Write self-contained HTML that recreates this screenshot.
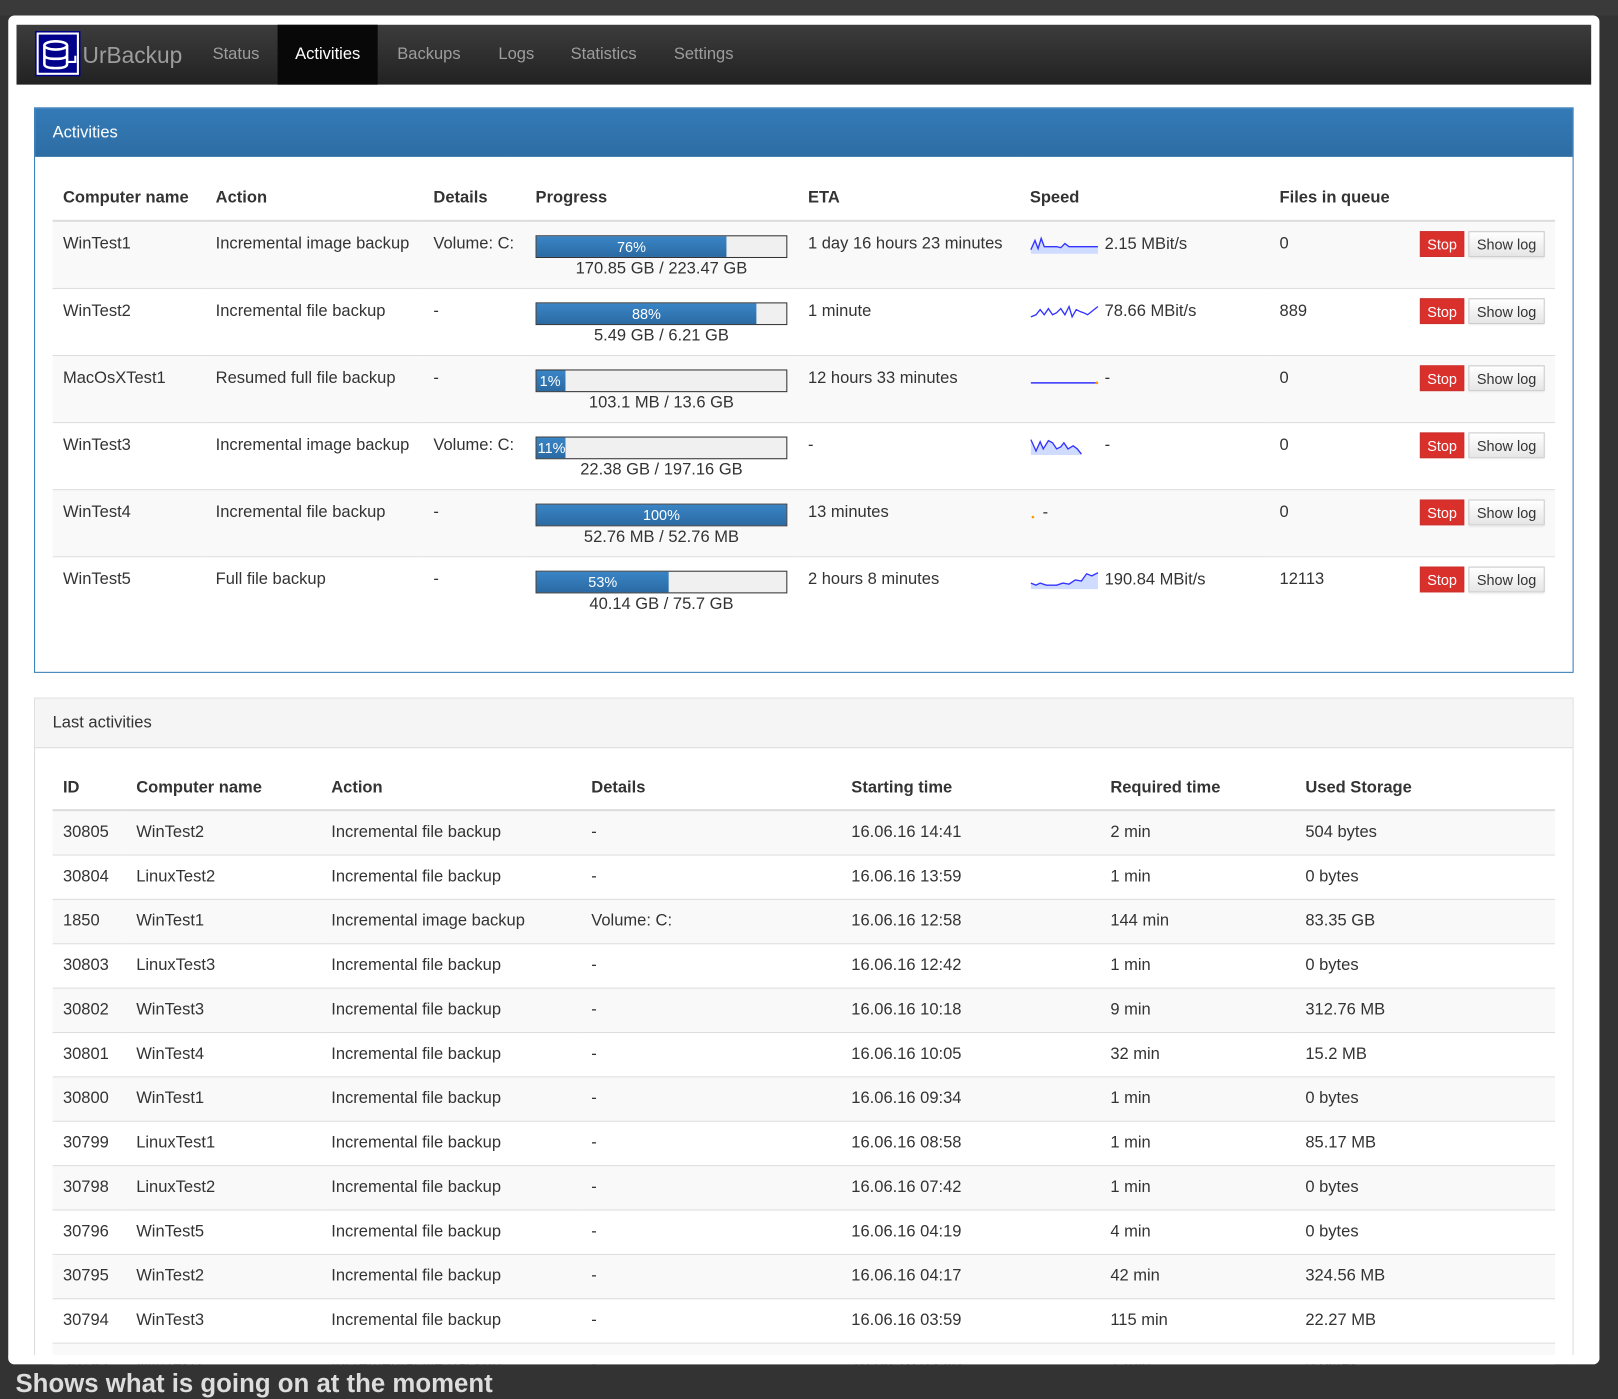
<!DOCTYPE html>
<html><head><meta charset="utf-8"><style>
html,body{margin:0;padding:0;width:1618px;height:1388px;overflow:hidden;background:#333;}
#w{position:absolute;left:0;top:0;width:1568px;height:1345px;transform:scale(1.03189,1.0320);transform-origin:0 0;font-family:"Liberation Sans",sans-serif;color:#333;font-size:16px;}
.top{position:absolute;left:0;top:0;width:1568px;height:15px;background:#3a3a3a;}
.modal{position:absolute;left:8px;top:15px;width:1542px;height:1307px;background:#fff;border-radius:6px;overflow:hidden;}
.nav{position:absolute;left:8px;top:9px;width:1526px;height:58px;background:linear-gradient(#3c3c3c,#222);}
.logo{position:absolute;left:18px;top:6px;width:44px;height:44px;}
.brand{position:absolute;left:64px;top:17px;font-size:22px;color:#9d9d9d;}
.ni{position:absolute;top:0;height:58px;line-height:58px;color:#9d9d9d;font-size:16px;}
.act{background:#080808;color:#fff;padding:0 17px;}
.panel{position:absolute;left:25px;width:1490px;border:1px solid #337ab7;}
.ph{height:47px;line-height:47px;padding-left:17px;color:#fff;background:linear-gradient(#337ab7,#2e6da4);}
table{border-collapse:collapse;position:absolute;left:17px;width:1456px;}
th{text-align:left;font-weight:bold;padding:0 10px;border-bottom:2px solid #ddd;vertical-align:bottom;}
td{vertical-align:top;padding:0 10px;border-top:1px solid #ddd;}
.t1 tbody tr:nth-child(odd),.t2 tbody tr:nth-child(odd){background:#f9f9f9;}
.t1 td{height:65px;padding-top:13px;box-sizing:border-box;}
.pb{width:242px;height:20px;border:1px solid #333;background:#f0f0f0;position:relative;font-size:14px;color:#fff;line-height:20px;}
.pf{position:absolute;left:0;top:0;height:20px;background:linear-gradient(#3a85c6,#2b6aa3);text-align:center;}
.pt{width:244px;text-align:center;margin-top:2px;}
.btn{position:absolute;top:9px;height:25px;line-height:25px;font-size:14px;text-align:center;box-sizing:border-box;}
.stop{left:146px;width:43px;background:#d9302c;color:#fff;border:1px solid #c9302c;}
.log{left:193px;width:74px;background:linear-gradient(#fff,#e6e6e6);border:1px solid #ccc;color:#333;box-shadow:0 1px 2px rgba(0,0,0,.1);}
.t2 td{height:42px;vertical-align:middle;}
</style></head><body><div id="w">
<div class="top"></div>
<div class="modal">
<div class="nav">
<svg class="logo" viewBox="0 0 44 44"><rect x="0" y="0" width="44" height="44" fill="#00008b"/><rect x="2.5" y="2.5" width="39" height="39" fill="none" stroke="#fff" stroke-width="2"/><ellipse cx="20" cy="14" rx="11" ry="4" fill="none" stroke="#fff" stroke-width="2.5"/><path d="M9 14v18c0 3 5 4 11 4s11-1 11-4V14M9 23c0 3 5 4 11 4s11-1 11-4" fill="none" stroke="#fff" stroke-width="2.5"/><path d="M31 30h8v-6" fill="none" stroke="#fff" stroke-width="2"/></svg>
<div class="brand">UrBackup</div>
<div class="ni" style="left:190px">Status</div>
<div class="ni act" style="left:253px">Activities</div>
<div class="ni" style="left:369px">Backups</div>
<div class="ni" style="left:467px">Logs</div>
<div class="ni" style="left:537px">Statistics</div>
<div class="ni" style="left:637px">Settings</div>
</div>

<div class="panel" style="top:89px;height:546px;">
<div class="ph">Activities</div>
<table class="t1" style="top:74px;">
<thead><tr style="height:35px"><th style="width:128px;padding-bottom:12px">Computer name</th><th style="width:191px;padding-bottom:12px">Action</th><th style="width:79px;padding-bottom:12px">Details</th><th style="width:243px;padding-bottom:12px">Progress</th><th style="width:195px;padding-bottom:12px">ETA</th><th style="width:222px;padding-bottom:12px">Speed</th><th style="padding-bottom:12px">Files in queue</th></tr></thead>
<tbody>
<tr><td>WinTest1</td><td>Incremental image backup</td><td>Volume: C:</td><td><div class="pb"><div class="pf" style="width:76%">76%</div></div><div class="pt">170.85 GB / 223.47 GB</div></td><td>1 day 16 hours 23 minutes</td><td><svg width="68" height="18" style="vertical-align:middle"><path d="M1 14L5 5 8 13 11 3 14 11 18 11 22 11 26 11 30 12 34 8 38 11 42 11 48 11 54 11 66 11L66 18 1 18Z" fill="#cfdcff"/><polyline points="1,14 5,5 8,13 11,3 14,11 26,11 30,12 34,8 38,11 66,11" fill="none" stroke="#33f" stroke-width="1.3"/></svg> 2.15 MBit/s</td><td style="position:relative">0<div class="btn stop">Stop</div><div class="btn log">Show log</div></td></tr>
<tr><td>WinTest2</td><td>Incremental file backup</td><td>-</td><td><div class="pb"><div class="pf" style="width:88%">88%</div></div><div class="pt">5.49 GB / 6.21 GB</div></td><td>1 minute</td><td><svg width="68" height="18" style="vertical-align:middle"><polyline points="1,14 6,12 10,7 14,12 18,6 22,12 26,10 30,6 34,12 38,4 41,14 45,7 49,9 52,10 56,12 61,8 66,4" fill="none" stroke="#33f" stroke-width="1.3"/></svg> 78.66 MBit/s</td><td style="position:relative">889<div class="btn stop">Stop</div><div class="btn log">Show log</div></td></tr>
<tr><td>MacOsXTest1</td><td>Resumed full file backup</td><td>-</td><td><div class="pb"><div class="pf" style="text-align:left;padding-left:3px;box-sizing:border-box;width:28px">1%</div></div><div class="pt">103.1 MB / 13.6 GB</div></td><td>12 hours 33 minutes</td><td><svg width="68" height="18" style="vertical-align:middle"><line x1="1" y1="13" x2="64" y2="13" stroke="#33f" stroke-width="1.5"/><circle cx="65" cy="13" r="1.3" fill="#f90"/></svg> -</td><td style="position:relative">0<div class="btn stop">Stop</div><div class="btn log">Show log</div></td></tr>
<tr><td>WinTest3</td><td>Incremental image backup</td><td>Volume: C:</td><td><div class="pb"><div class="pf" style="width:28px;text-align:left;padding-left:1px;box-sizing:border-box">11%</div></div><div class="pt">22.38 GB / 197.16 GB</div></td><td>-</td><td><svg width="68" height="18" style="vertical-align:middle"><path d="M1 3L6 14 10 5 13 12 18 4 22 6 26 12 30 10 33 6 37 12 42 9 46 12 50 17L50 18 1 18Z" fill="#cfdcff"/><polyline points="1,3 6,14 10,5 13,12 18,4 22,6 26,12 30,10 33,6 37,12 42,9 46,12 50,17" fill="none" stroke="#33f" stroke-width="1.3"/></svg> -</td><td style="position:relative">0<div class="btn stop">Stop</div><div class="btn log">Show log</div></td></tr>
<tr><td>WinTest4</td><td>Incremental file backup</td><td>-</td><td><div class="pb"><div class="pf" style="width:100%">100%</div></div><div class="pt">52.76 MB / 52.76 MB</div></td><td>13 minutes</td><td><svg width="8" height="18" style="vertical-align:middle"><circle cx="3" cy="13" r="1.3" fill="#f90"/></svg> -</td><td style="position:relative">0<div class="btn stop">Stop</div><div class="btn log">Show log</div></td></tr>
<tr><td>WinTest5</td><td>Full file backup</td><td>-</td><td><div class="pb"><div class="pf" style="width:53%">53%</div></div><div class="pt">40.14 GB / 75.7 GB</div></td><td>2 hours 8 minutes</td><td><svg width="68" height="18" style="vertical-align:middle"><path d="M1 12L6 14 10 12 16 14 26 14 32 12 38 13 44 9 50 10 55 3 60 5 66 2L66 18 1 18Z" fill="#cfdcff"/><polyline points="1,12 6,14 10,12 16,14 26,14 32,12 38,13 44,9 50,10 55,3 60,5 66,2" fill="none" stroke="#33f" stroke-width="1.3"/></svg> 190.84 MBit/s</td><td style="position:relative">12113<div class="btn stop">Stop</div><div class="btn log">Show log</div></td></tr>
</tbody></table>
</div>

<div class="panel" style="top:661px;height:700px;border-color:#ddd;">
<div class="ph" style="background:#f5f5f5;color:#333;border-bottom:1px solid #ddd;">Last activities</div>
<table class="t2" style="top:73px;">
<thead><tr style="height:35px"><th style="width:51px;padding-bottom:11px">ID</th><th style="width:169px;padding-bottom:11px">Computer name</th><th style="width:232px;padding-bottom:11px">Action</th><th style="width:232px;padding-bottom:11px">Details</th><th style="width:231px;padding-bottom:11px">Starting time</th><th style="width:169px;padding-bottom:11px">Required time</th><th style="padding-bottom:11px">Used Storage</th></tr></thead>
<tbody>
<tr><td>30805</td><td>WinTest2</td><td>Incremental file backup</td><td>-</td><td>16.06.16 14:41</td><td>2 min</td><td>504 bytes</td></tr>
<tr><td>30804</td><td>LinuxTest2</td><td>Incremental file backup</td><td>-</td><td>16.06.16 13:59</td><td>1 min</td><td>0 bytes</td></tr>
<tr><td>1850</td><td>WinTest1</td><td>Incremental image backup</td><td>Volume: C:</td><td>16.06.16 12:58</td><td>144 min</td><td>83.35 GB</td></tr>
<tr><td>30803</td><td>LinuxTest3</td><td>Incremental file backup</td><td>-</td><td>16.06.16 12:42</td><td>1 min</td><td>0 bytes</td></tr>
<tr><td>30802</td><td>WinTest3</td><td>Incremental file backup</td><td>-</td><td>16.06.16 10:18</td><td>9 min</td><td>312.76 MB</td></tr>
<tr><td>30801</td><td>WinTest4</td><td>Incremental file backup</td><td>-</td><td>16.06.16 10:05</td><td>32 min</td><td>15.2 MB</td></tr>
<tr><td>30800</td><td>WinTest1</td><td>Incremental file backup</td><td>-</td><td>16.06.16 09:34</td><td>1 min</td><td>0 bytes</td></tr>
<tr><td>30799</td><td>LinuxTest1</td><td>Incremental file backup</td><td>-</td><td>16.06.16 08:58</td><td>1 min</td><td>85.17 MB</td></tr>
<tr><td>30798</td><td>LinuxTest2</td><td>Incremental file backup</td><td>-</td><td>16.06.16 07:42</td><td>1 min</td><td>0 bytes</td></tr>
<tr><td>30796</td><td>WinTest5</td><td>Incremental file backup</td><td>-</td><td>16.06.16 04:19</td><td>4 min</td><td>0 bytes</td></tr>
<tr><td>30795</td><td>WinTest2</td><td>Incremental file backup</td><td>-</td><td>16.06.16 04:17</td><td>42 min</td><td>324.56 MB</td></tr>
<tr><td>30794</td><td>WinTest3</td><td>Incremental file backup</td><td>-</td><td>16.06.16 03:59</td><td>115 min</td><td>22.27 MB</td></tr>
<tr><td>30793</td><td>WinTest1</td><td>Incremental file backup</td><td>-</td><td>16.06.16 03:40</td><td>1 min</td><td>0 bytes</td></tr>
</tbody></table>
</div>
<div style="position:absolute;left:0;top:1298px;width:1542px;height:9px;background:#fff;"></div>
</div>
<div style="position:absolute;left:15px;top:1327px;color:#ddd;font-size:25px;font-weight:bold;">Shows what is going on at the moment</div>
</div></body></html>
